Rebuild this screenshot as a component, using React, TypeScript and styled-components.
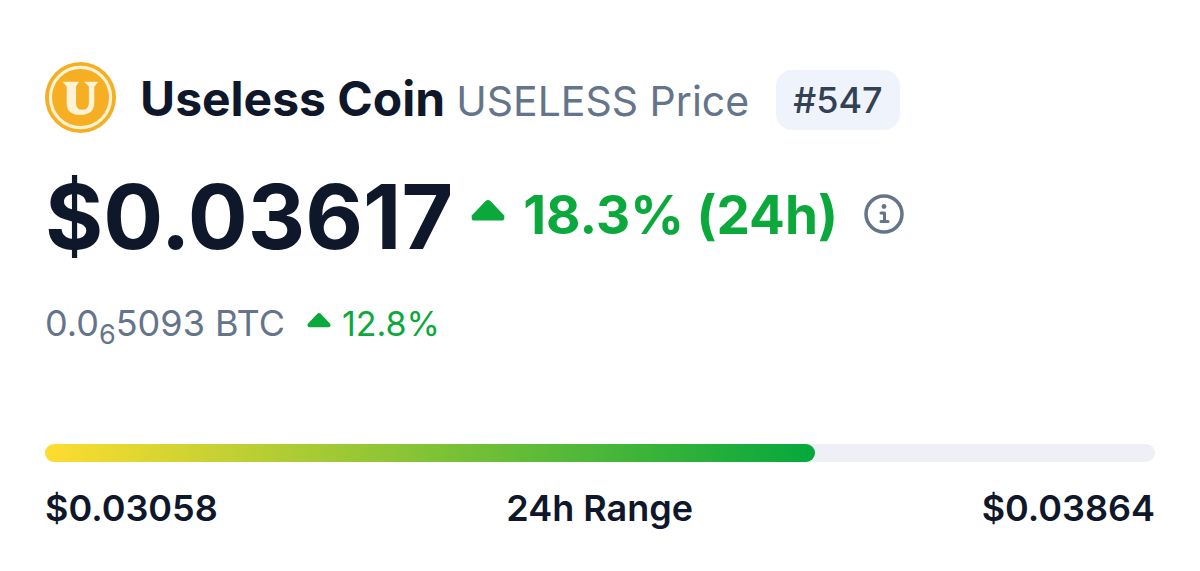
import React from 'react';
import styled, { createGlobalStyle } from 'styled-components';

const Global = createGlobalStyle`
  * { box-sizing: border-box; }
  body { margin: 0; background: #fff; color: #0f172a; font-family: Inter, "Liberation Sans", sans-serif; }
`;
const Card = styled.main`
  padding: 60px 45px 40px;
  display: flex;
  flex-direction: column;
`;
const Heading = styled.header`
  display: flex;
  align-items: center;
  height: 74px;
`;
const TitleGroup = styled.div`
  display: flex;
  align-items: center;
  gap: 27px;
  padding-top: 6px;
`;
const Title = styled.h1`
  margin: 0 0 0 24px;
  font-size: 48px;
  line-height: 56px;
  font-weight: 700;
  white-space: nowrap;
`;
const Symbol = styled.span`
  margin-left: 11px;
  font-size: 41px;
  font-weight: 400;
  color: #64748b;
`;
const Rank = styled.span`
  padding: 0 17px;
  border-radius: 16px;
  background: #eff3fb;
  color: #334155;
  font-size: 36px;
  line-height: 60px;
  font-weight: 500;
`;
const PriceRow = styled.div`
  display: flex;
  align-items: center;
  margin-top: 25px;
  height: 112px;
  white-space: nowrap;
`;
const Price = styled.span`
  padding-top: 4px;
  font-size: 89px;
  line-height: 112px;
  font-weight: 700;
`;
const Change = styled.span<{ $large?: boolean }>`
  display: inline-flex;
  align-items: center;
  gap: ${(p) => (p.$large ? 18 : 11)}px;
  margin-left: ${(p) => (p.$large ? 18 : 22)}px;
  color: #0ba83c;
  font-size: ${(p) => (p.$large ? 53 : 34)}px;
  font-weight: ${(p) => (p.$large ? 700 : 400)};
`;
const InfoButton = styled.button`
  display: flex;
  margin-left: 26px;
  padding: 0 0 3px;
  border: 0;
  background: none;
  color: #64748b;
`;
const BtcRow = styled.div`
  display: flex;
  align-items: center;
  margin-top: 24px;
  height: 56px;
  color: #64748b;
  font-size: 36px;
  white-space: nowrap;
`;
const Sub = styled.sub`
  font-size: 27px;
  line-height: 0;
`;
const Track = styled.div`
  margin-top: 93px;
  height: 18px;
  border-radius: 9px;
  background: #eff0f5;
`;
const Fill = styled.div`
  height: 18px;
  border-radius: 9px;
  background: linear-gradient(90deg, #fedd2f, #04a83c);
`;
const Labels = styled.div`
  display: flex;
  justify-content: space-between;
  margin-top: 24px;
  font-size: 36px;
  line-height: 44px;
  font-weight: 600;
`;

const Up = ({ width, height }: { width: number; height: number }) => (
  <svg width={width} height={height} viewBox="0 0 34 30" fill="currentColor" aria-hidden="true">
    <path d="M14.6 1.1Q17-1 19.4 1.1L33 15.2Q34.4 20.5 30.5 20.5H3.5Q-.4 20.5 1 15.2Z" />
  </svg>
);
const Logo = () => (
  <svg width="71" height="71" viewBox="0 0 72 72" aria-hidden="true">
    <circle cx="36" cy="36" r="36" fill="#f6ae22" />
    <circle cx="36" cy="36" r="30.5" fill="none" stroke="#fff3d6" strokeWidth="3.2" />
    <path d="M18 20H34.5L31.500 24.500V42Q31.500 48.500 37.500 48.500Q44.500 48.500 44.500 41V24.500L39.500 20H54L50 25V41Q50 53.500 36 53.500Q22 53.500 22 42V25Z" fill="#fff3d6" />
  </svg>
);

export default function App() {
  const low = 0.03058, high = 0.03864, price = 0.03617;
  return (
    <>
      <Global />
      <Card>
        <Heading>
          <Logo />
          <TitleGroup>
            <Title>Useless Coin<Symbol>USELESS Price</Symbol></Title>
            <Rank>#547</Rank>
          </TitleGroup>
        </Heading>
        <PriceRow>
          <Price>${price}</Price>
          <Change $large><Up width={34} height={30} />18.3% (24h)</Change>
          <InfoButton type="button" aria-label="Price information">
            <svg width="40" height="40" viewBox="0 0 40 40" fill="none" stroke="currentColor" strokeWidth="3.5" strokeLinecap="round" strokeLinejoin="round">
              <circle cx="20" cy="20" r="18" />
              <path d="M17 19H20.500V27.500M17 27.500H24" strokeWidth="3" />
              <circle cx="20" cy="12.500" r="2.400" fill="currentColor" stroke="none" />
            </svg>
          </InfoButton>
        </PriceRow>
        <BtcRow>
          <span>0.0<Sub>6</Sub>5093 BTC</span>
          <Change><Up width={24} height={21} />12.8%</Change>
        </BtcRow>
        <Track><Fill style={{ width: `${((price - low) / (high - low)) * 100}%` }} /></Track>
        <Labels><span>${low}</span><span>24h Range</span><span>${high}</span></Labels>
      </Card>
    </>
  );
}
